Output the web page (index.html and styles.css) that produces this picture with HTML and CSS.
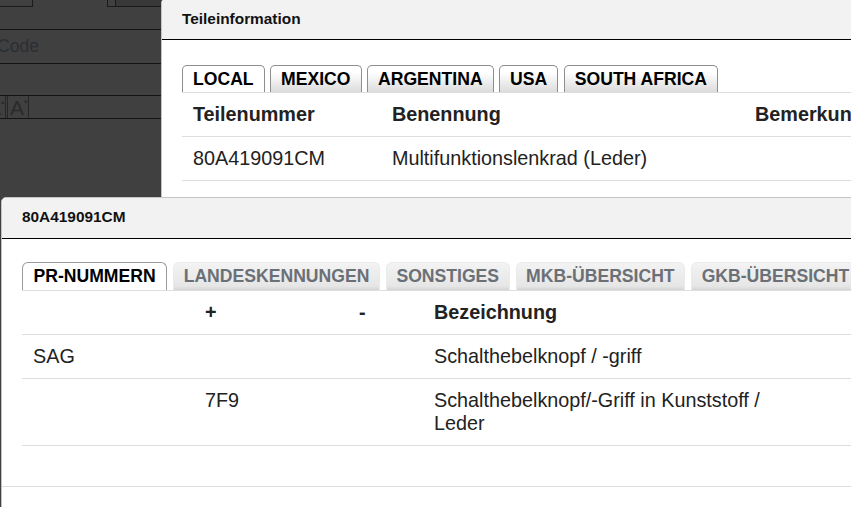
FILE: index.html
```html
<!DOCTYPE html>
<html lang="de">
<head>
  <meta charset="UTF-8" />
  <meta name="viewport" content="width=device-width, initial-scale=1.0"/>
  <title>Teileinformation</title>
  <link rel="stylesheet" href="styles.css">
</head>
<body>

  <!-- Seite hinter dem Overlay -->
  <div class="backdrop">
    <div class="bd-row bd-top">
      <span class="bd-key bd-key-a"></span>
      <span class="bd-key bd-key-b"></span>
      <span class="bd-key bd-key-c"></span>
    </div>
    <div class="bd-row bd-code">Code</div>
    <div class="bd-row bd-empty"></div>
    <div class="bd-row bd-fonts">
      <span class="bd-font">A<sup>&#9652;</sup></span>
      <span class="bd-font">A<sup>&#9662;</sup></span>
    </div>
  </div>

  <!-- Dialog 1 -->
  <div class="dialog dialog-parts">
    <div class="dialog-head">Teileinformation</div>
    <div class="dialog-body">
      <div class="tabs tabs-light">
        <span class="tab active">LOCAL</span>
        <span class="tab">MEXICO</span>
        <span class="tab">ARGENTINA</span>
        <span class="tab">USA</span>
        <span class="tab">SOUTH AFRICA</span>
      </div>
      <table class="grid grid-parts">
        <colgroup>
          <col style="width:199px">
          <col style="width:363px">
          <col style="width:200px">
        </colgroup>
        <thead>
          <tr><th>Teilenummer</th><th>Benennung</th><th>Bemerkung</th></tr>
        </thead>
        <tbody>
          <tr><td>80A419091CM</td><td>Multifunktionslenkrad (Leder)</td><td></td></tr>
        </tbody>
      </table>
    </div>
  </div>

  <!-- Dialog 2 -->
  <div class="dialog dialog-pr">
    <div class="dialog-head">80A419091CM</div>
    <div class="dialog-body">
      <div class="tabs tabs-soft">
        <span class="tab active">PR-NUMMERN</span>
        <span class="tab">LANDESKENNUNGEN</span>
        <span class="tab">SONSTIGES</span>
        <span class="tab">MKB-ÜBERSICHT</span>
        <span class="tab">GKB-ÜBERSICHT</span>
      </div>
      <table class="grid grid-pr">
        <colgroup>
          <col style="width:172px">
          <col style="width:154px">
          <col style="width:75px">
          <col style="width:377px">
          <col style="width:150px">
        </colgroup>
        <thead>
          <tr><th></th><th>+</th><th>-</th><th>Bezeichnung</th><th></th></tr>
        </thead>
        <tbody>
          <tr><td>SAG</td><td></td><td></td><td>Schalthebelknopf / -griff</td><td></td></tr>
          <tr><td></td><td>7F9</td><td></td><td>Schalthebelknopf/-Griff in Kunststoff / Leder</td><td></td></tr>
        </tbody>
      </table>
    </div>
    <div class="dialog-foot"></div>
  </div>

</body>
</html>
```

FILE: styles.css
```css
* {
  box-sizing: border-box;
}

body {
  margin: 0;
  width: 851px;
  height: 507px;
  overflow: hidden;
  position: relative;
  background: #404040;
  font-family: "Liberation Sans", Arial, sans-serif;
}

/* Seite im Hintergrund (abgedunkelt) */
.backdrop {
  width: 162px;
  color: #2b2e33;
}

.bd-row {
  border-bottom: 1px solid #141414;
}

.bd-top {
  height: 30px;
  display: flex;
  align-items: flex-start;
}

.bd-key {
  height: 7px;
  border: 1px solid #1b1b1b;
  border-top: 0;
}

.bd-key-a {
  width: 33px;
  border-left: 0;
}

.bd-key-b {
  width: 8px;
  margin-left: 74px;
  border-right: 0;
}

.bd-key-c {
  flex: 1;
  background: #383838;
  border-right: 0;
}

.bd-code {
  height: 34px;
  line-height: 33px;
  font-size: 17.6px;
  text-indent: -3px;
}

.bd-empty {
  height: 32px;
}

.bd-fonts {
  height: 23px;
  display: flex;
  align-items: stretch;
  margin-left: -16px;
}

.bd-font {
  width: 22px;
  border: 1px solid #262626;
  border-top: 0;
  border-bottom: 0;
  margin-right: 1px;
  font-size: 21px;
  line-height: 24px;
  color: #2a2a2a;
  padding-left: 2px;
  overflow: hidden;
  white-space: nowrap;
}

.bd-font sup {
  font-size: 7px;
  vertical-align: baseline;
  position: relative;
  top: -11px;
}

/* Dialoge */
.dialog {
  position: absolute;
  background: #fff;
  border: 1px solid #c4c4c4;
  border-radius: 5px;
  overflow: hidden;
}

.dialog-parts {
  left: 161px;
  top: -2px;
  width: 760px;
  height: 240px;
}

.dialog-pr {
  left: 1px;
  top: 197px;
  width: 920px;
  height: 330px;
}

.dialog-head {
  height: 41px;
  padding: 0 20px;
  background: #f2f2f2;
  border-bottom: 1px solid #000;
  font-size: 15.4px;
  font-weight: bold;
  line-height: 40px;
  color: #111;
}

.dialog-pr .dialog-head {
  line-height: 38px;
}

.dialog-body {
  padding: 25px 0 40px 20px;
}

.dialog-pr .dialog-body {
  padding-top: 23px;
}

.dialog-foot {
  border-top: 1px solid #dedede;
  height: 40px;
}

/* Reiter */
.tabs {
  display: flex;
  align-items: flex-end;
  gap: 6px;
  white-space: nowrap;
}

.tab {
  font-size: 17.6px;
  font-weight: bold;
  border-radius: 5px 5px 0 0;
  border: 1px solid #8e8e8e;
  border-bottom: 0;
}

.tabs-light {
  height: 27px;
  gap: 5.5px;
}

.tabs-light .tab {
  height: 27px;
  line-height: 26px;
  padding: 0 10px;
  color: #000;
  background: linear-gradient(#fff 25%, #dcdcdc);
}

.tabs-light .tab.active {
  background: #fff;
}

.tabs-soft {
  height: 28px;
  gap: 6px;
}

.tabs-soft .tab {
  height: 28px;
  line-height: 27px;
  padding: 0 9.5px;
  color: #6b7076;
  border-color: #ebebeb;
  border-radius: 6px 6px 0 0;
  background: linear-gradient(#f3f3f3, #e6e6e6 86%, #d3d4d6);
}

.tabs-soft .tab.active {
  padding: 0 10.5px;
  color: #000;
  border-color: #9a9a9a;
  background: #fff;
}

/* Tabellen */
.grid {
  border-collapse: collapse;
  table-layout: fixed;
  color: #222;
  font-size: 19.8px;
  line-height: 23px;
}

.grid th,
.grid td {
  text-align: left;
  vertical-align: top;
  padding: 10px 11px;
  border-top: 1px solid #dedede;
  border-bottom: 1px solid #dedede;
}

.grid th {
  font-weight: bold;
}

.grid-parts {
  width: 762px;
}

.grid-pr {
  width: 928px;
}
```
